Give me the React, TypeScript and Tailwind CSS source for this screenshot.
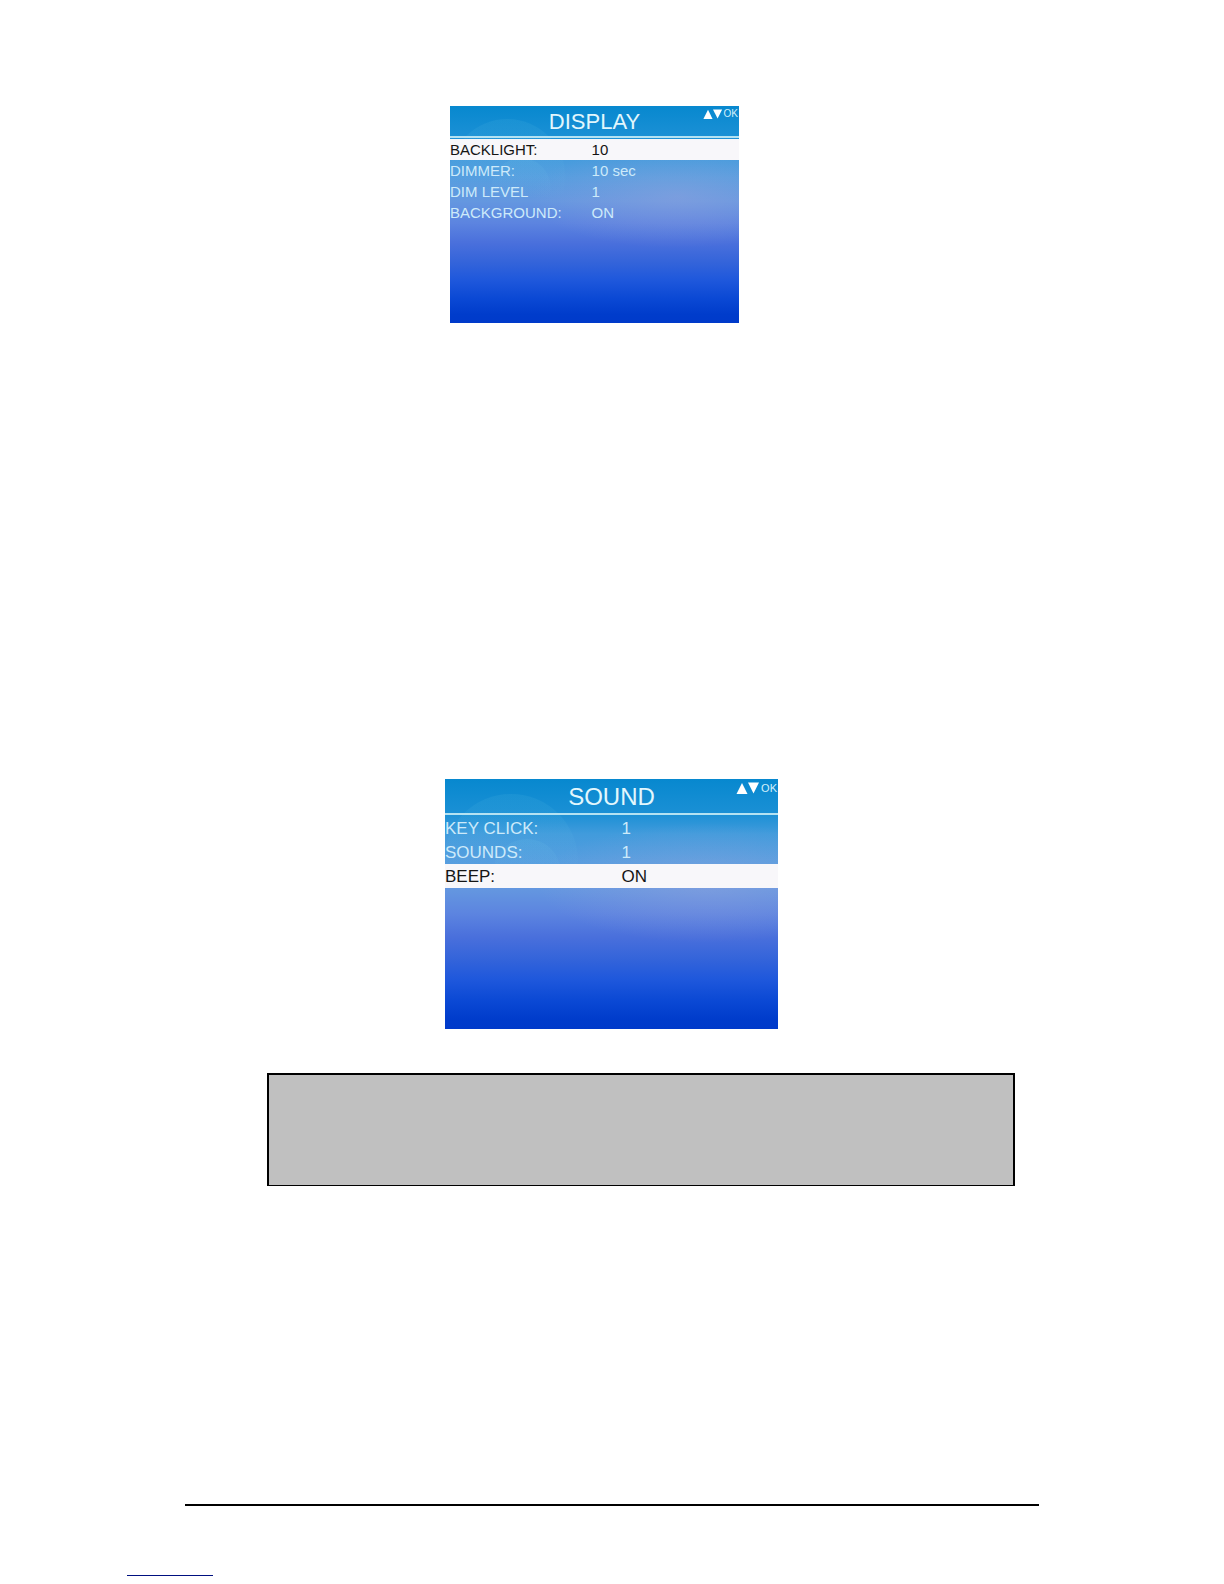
import clsx from "clsx"

type Row = { label: string; value: string; active?: boolean }

const displayRows: Row[] = [
  { label: "BACKLIGHT:", value: "10", active: true },
  { label: "DIMMER:", value: "10 sec" },
  { label: "DIM LEVEL", value: "1" },
  { label: "BACKGROUND:", value: "ON" },
]

const soundRows: Row[] = [
  { label: "KEY CLICK:", value: "1" },
  { label: "SOUNDS:", value: "1" },
  { label: "BEEP:", value: "ON", active: true },
]

function Backdrop() {
  return (
    <svg
      className="absolute inset-0 h-full w-full"
      viewBox="0 0 333 250"
      preserveAspectRatio="none"
      aria-hidden="true"
    >
      <defs>
        <radialGradient id="glow">
          <stop offset="0" stopColor="#a8a8dc" stopOpacity="0.35" />
          <stop offset="1" stopColor="#a8a8dc" stopOpacity="0" />
        </radialGradient>
        <linearGradient id="bubble" x1="0" y1="0" x2="0" y2="1">
          <stop offset="0" stopColor="#8fe0f0" stopOpacity="0.08" />
          <stop offset="0.7" stopColor="#8fe0f0" stopOpacity="0" />
        </linearGradient>
      </defs>
      <circle cx="66" cy="82" r="67" fill="url(#bubble)" />
      <circle cx="82" cy="94" r="34" fill="url(#bubble)" />
      <ellipse cx="262" cy="104" rx="170" ry="60" fill="url(#glow)" />
    </svg>
  )
}

function NavKeys({ large }: { large?: boolean }) {
  return (
    <div className="absolute top-0 right-0 flex items-center gap-px pr-px text-[#d3f0fb]">
      <svg className={large ? "h-3 w-6" : "h-2.5 w-5"} viewBox="0 0 24 12" aria-hidden="true">
        <path d="M6 1 L11.5 12 H0.5 Z" fill="#fff" />
        <path d="M12 0.5 H23 L17.5 11.5 Z" fill="#fff" />
      </svg>
      <span className={large ? "text-[11px] leading-[18px]" : "text-[10px] leading-4"}>OK</span>
    </div>
  )
}

function Screen({ title, rows, large }: { title: string; rows: Row[]; large?: boolean }) {
  return (
    <section
      className={clsx(
        "relative aspect-[4/3] max-w-full overflow-hidden",
        "bg-[linear-gradient(to_bottom,#0788cf_0%,#1b90d5_14%,#419bdc_22%,#559ddf_33%,#6497e0_44%,#5c84e0_54%,#4a70dc_63%,#3464da_72%,#1f58dc_80%,#0a48d4_89%,#003ccb_96%,#003aca_100%)]",
        large ? "w-[333px]" : "w-[289px]",
      )}
    >
      <Backdrop />
      <div className="relative">
        <h2
          className={clsx(
            "border-b-2 border-[#b4e2f2] pt-0.5 text-center text-[#e2f7fd]",
            large ? "text-[24px] leading-8" : "text-[22px] leading-7",
          )}
        >
          {title}
        </h2>
        <NavKeys large={large} />
        <dl className={clsx("pt-px", large ? "text-[17px] leading-[22px]" : "text-[15px] leading-[21px]")}>
          {rows.map((row) => (
            <div
              key={row.label}
              className={clsx(
                "flex",
                large && "pt-0.5",
                row.active ? "bg-[#f8f7fa] text-[#151515]" : "text-[#cdeafa]",
              )}
            >
              <dt className={large ? "w-[53%]" : "w-[49%]"}>{row.label}</dt>
              <dd>{row.value}</dd>
            </div>
          ))}
        </dl>
      </div>
    </section>
  )
}

export default function App() {
  return (
    <div className="bg-white pt-[106px] pb-2 font-['Liberation_Sans',Arial,sans-serif]">
      <main className="mx-[185px] flex flex-col items-center border-b-2 border-black pb-[318px]">
        <div className="mr-[35px]">
          <Screen title="DISPLAY" rows={displayRows} />
        </div>

        <div className="mt-[456px] mr-px">
          <Screen title="SOUND" rows={soundRows} large />
        </div>

        {/* Note box */}
        <div className="mt-11 flex self-stretch pr-6 pl-[82px]">
          <div className="h-[113px] grow border-2 border-b border-black bg-[#c0c0c0]" />
        </div>
      </main>

      {/* Footer link rule */}
      <footer className="pt-[69px] pl-[127px]">
        <div className="h-px w-[86px] bg-[#001080]" />
      </footer>
    </div>
  )
}
